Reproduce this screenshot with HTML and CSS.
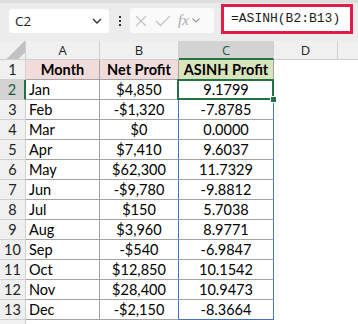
FILE: index.html
```html
<!DOCTYPE html>
<html lang="en">
  <head>
    <meta charset="UTF-8" />
    <title>ASINH Profit</title>
    <link rel="stylesheet" href="styles.css">
  </head>
  <body>
    <!-- Formula bar -->
    <div class="toolbar">
      <div class="name-box">
        <span>C2</span>
        <svg class="chev" width="10" height="6" viewBox="0 0 10 6"><path d="M1 1l4 4 4-4" fill="none" stroke="#333" stroke-width="1.3"/></svg>
      </div>
      <div class="dots"><i></i><i></i><i></i></div>
      <div class="fx-box">
        <svg width="14" height="14" viewBox="0 0 14 14"><path d="M2 2l10 10M12 2L2 12" stroke="#c4c4c4" stroke-width="1.3"/></svg>
        <svg width="16" height="14" viewBox="0 0 16 14"><path d="M1 7l4.5 4.5L15 2" fill="none" stroke="#c4c4c4" stroke-width="1.3"/></svg>
        <span class="fx">fx</span>
        <svg width="8" height="5" viewBox="0 0 8 5"><path d="M.5 .5l3.5 3.5 3.5-3.5" fill="none" stroke="#9a9a9a" stroke-width="1.1"/></svg>
      </div>
      <div class="formula">=ASINH(B2:B13)</div>
    </div>

    <!-- Sheet -->
    <div class="sheet">
      <div class="corner"></div>
      <div class="col-head">A</div>
      <div class="col-head">B</div>
      <div class="col-head active">C</div>
      <div class="col-head">D</div>
      <div class="col-head last"></div>

      <div class="row-head">1</div>
      <div class="cell th pink">Month</div>
      <div class="cell th pink">Net Profit</div>
      <div class="cell th green">ASINH Profit</div>
      <div class="blank"></div><div class="blank"></div>

      <div class="row-head active">2</div>
      <div class="cell">Jan</div>
      <div class="cell num b">$4,850</div>
      <div class="cell num c selected">9.1799<span class="handle"></span></div>
      <div class="blank"></div><div class="blank"></div>

      <div class="row-head">3</div>
      <div class="cell">Feb</div>
      <div class="cell num b">-$1,320</div>
      <div class="cell num c">-7.8785</div>
      <div class="blank"></div><div class="blank"></div>

      <div class="row-head">4</div>
      <div class="cell">Mar</div>
      <div class="cell num b">$0</div>
      <div class="cell num c">0.0000</div>
      <div class="blank"></div><div class="blank"></div>

      <div class="row-head">5</div>
      <div class="cell">Apr</div>
      <div class="cell num b">$7,410</div>
      <div class="cell num c">9.6037</div>
      <div class="blank"></div><div class="blank"></div>

      <div class="row-head">6</div>
      <div class="cell">May</div>
      <div class="cell num b">$62,300</div>
      <div class="cell num c">11.7329</div>
      <div class="blank"></div><div class="blank"></div>

      <div class="row-head">7</div>
      <div class="cell">Jun</div>
      <div class="cell num b">-$9,780</div>
      <div class="cell num c">-9.8812</div>
      <div class="blank"></div><div class="blank"></div>

      <div class="row-head">8</div>
      <div class="cell">Jul</div>
      <div class="cell num b">$150</div>
      <div class="cell num c">5.7038</div>
      <div class="blank"></div><div class="blank"></div>

      <div class="row-head">9</div>
      <div class="cell">Aug</div>
      <div class="cell num b">$3,960</div>
      <div class="cell num c">8.9771</div>
      <div class="blank"></div><div class="blank"></div>

      <div class="row-head">10</div>
      <div class="cell">Sep</div>
      <div class="cell num b">-$540</div>
      <div class="cell num c">-6.9847</div>
      <div class="blank"></div><div class="blank"></div>

      <div class="row-head">11</div>
      <div class="cell">Oct</div>
      <div class="cell num b">$12,850</div>
      <div class="cell num c">10.1542</div>
      <div class="blank"></div><div class="blank"></div>

      <div class="row-head">12</div>
      <div class="cell">Nov</div>
      <div class="cell num b">$28,400</div>
      <div class="cell num c">10.9473</div>
      <div class="blank"></div><div class="blank"></div>

      <div class="row-head">13</div>
      <div class="cell">Dec</div>
      <div class="cell num b">-$2,150</div>
      <div class="cell num c end">-8.3664</div>
      <div class="blank"></div><div class="blank"></div>

      <div class="row-head"></div>
    </div>
  </body>
</html>
```

FILE: styles.css
```css
/* General */
body {
  margin: 0;
  width: 358px;
  height: 324px;
  overflow: hidden;
  background: #ffffff;
  font-family: "Lato", "Open Sans", sans-serif;
  color: #000;
}

/* Formula bar */
.toolbar {
  display: flex;
  align-items: flex-start;
  height: 41px;
  box-sizing: border-box;
  background: #ececec;
  border-top: 3px solid #dedede;
}

.name-box {
  display: flex;
  align-items: center;
  justify-content: space-between;
  margin: 6px 0 0 9px;
  width: 100px;
  height: 24px;
  box-sizing: border-box;
  padding: 0 7px 0 6px;
  background: #fff;
  border-radius: 4px;
  font-family: "Open Sans", sans-serif;
  font-size: 13.5px;
  color: #1a1a1a;
}

.dots {
  display: flex;
  flex-direction: column;
  gap: 2px;
  margin: 13px 0 0 10px;
}

.dots i {
  width: 2px;
  height: 2px;
  background: #333;
}

.fx-box {
  display: flex;
  align-items: center;
  gap: 7px;
  margin: 5px 0 0 9px;
  width: 84px;
  height: 25px;
  box-sizing: border-box;
  padding-left: 4px;
  background: #fafafa;
  border-radius: 4px;
}

.fx {
  font-family: "Liberation Serif", serif;
  font-style: italic;
  font-size: 15px;
  color: #a8a8a8;
  margin-right: -4px;
}

.formula {
  margin: 1px 0 0 7px;
  width: 132px;
  height: 30px;
  box-sizing: border-box;
  border: 3px solid #e31b4b;
  background: #fff;
  padding-left: 7px;
  font-family: "Liberation Mono", monospace;
  font-size: 13px;
  line-height: 24px;
  color: #1c1c1c;
}

/* Sheet grid */
.sheet {
  display: grid;
  grid-template-columns: 26px 74px 79px 95px 64px 20px;
  grid-template-rows: 19px;
  grid-auto-rows: 20px;
}

.sheet > div {
  box-sizing: border-box;
}

.corner {
  background: #f0f0f0 linear-gradient(135deg, transparent 58%, #c2c2c2 58%, #c2c2c2 84%, transparent 84%);
  border-right: 1px solid #cfcfcf;
  border-bottom: 1px solid #cfcfcf;
}

.col-head {
  display: flex;
  align-items: center;
  justify-content: center;
  background: #f0f0f0;
  border-right: 1px solid #cfcfcf;
  border-bottom: 1px solid #cfcfcf;
  font-family: "Open Sans", sans-serif;
  font-size: 13px;
  color: #222;
}

.col-head.last {
  border-right: none;
}

.col-head.active {
  background: #d3d3d3;
  border-bottom: 2px solid #217346;
  color: #185c37;
}

.row-head {
  display: flex;
  align-items: center;
  justify-content: center;
  background: #f0f0f0;
  border-right: 1px solid #cfcfcf;
  border-bottom: 1px solid #cfcfcf;
  font-size: 14.5px;
  color: #222;
}

.row-head.active {
  background: #d3d3d3;
  border-right: 2px solid #217346;
  color: #185c37;
}

.cell {
  display: flex;
  align-items: center;
  padding-left: 3px;
  border-right: 1px solid #a3a3a3;
  border-bottom: 1px solid #a3a3a3;
  font-size: 14.5px;
  white-space: nowrap;
}

.cell.th {
  justify-content: center;
  padding-left: 0;
  font-weight: 700;
}

.pink {
  background: #f2dcdb;
}

.green {
  background: #d8e4bc;
}

.num {
  justify-content: center;
  padding-left: 0;
}

.cell.b {
  border-right-color: #4472c4;
}

.cell.c {
  border-right-color: #4472c4;
}

.cell.c.end {
  border-bottom-color: #4472c4;
}

/* Active cell */
.selected {
  position: relative;
}

.selected::before {
  content: "";
  position: absolute;
  left: -2px;
  top: -1px;
  right: -1px;
  bottom: -1px;
  border: 2px solid #217346;
}

.handle {
  position: absolute;
  right: -4px;
  bottom: -4px;
  width: 5px;
  height: 5px;
  background: #217346;
  border: 1px solid #fff;
}

.blank {
  background: #fff;
}
```
